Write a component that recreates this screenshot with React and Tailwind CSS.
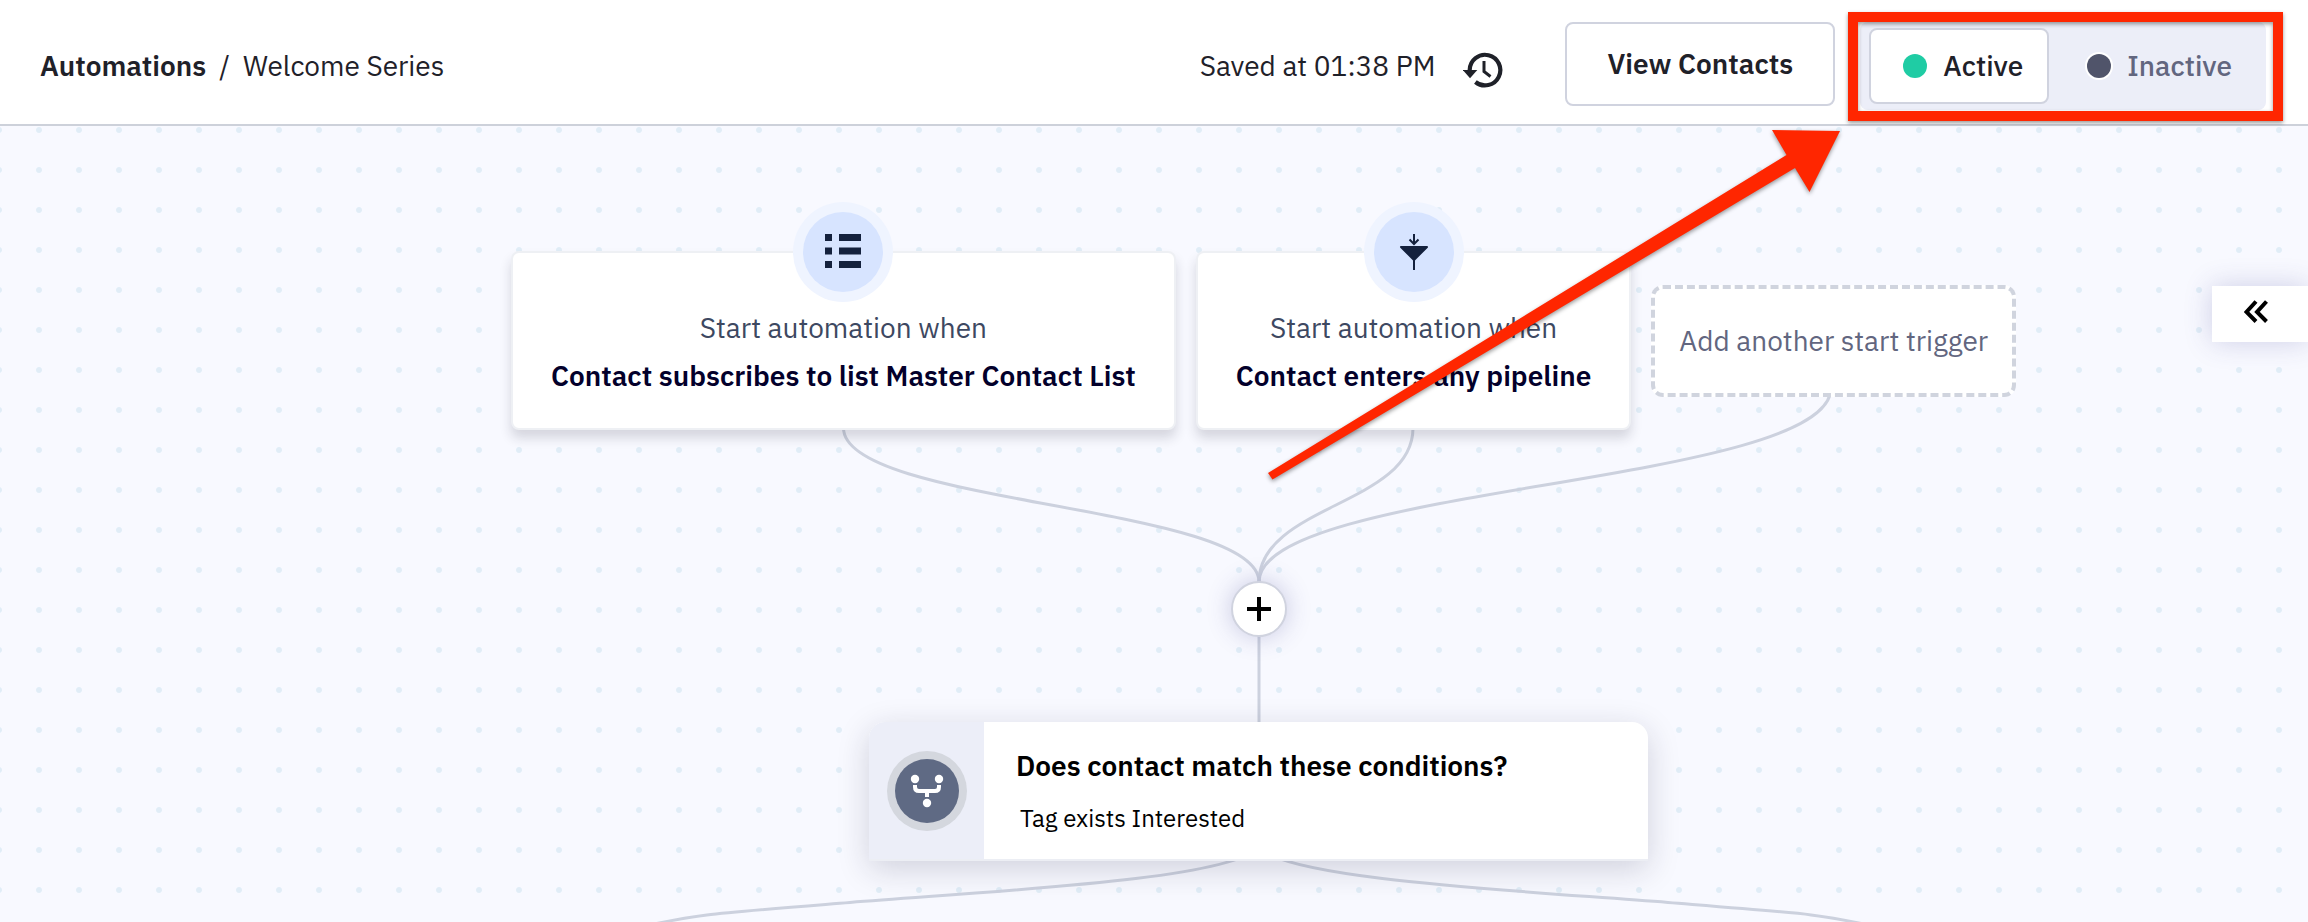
import React, { useState } from 'react';

const triggers = [
  { id: 'list', title: 'Contact subscribes to list Master Contact List', icon: ListIcon },
  { id: 'pipeline', title: 'Contact enters any pipeline', icon: FunnelIcon },
];

function HistoryIcon() {
  return (
    <svg width="40" height="36" viewBox="-22 -18 40 36" fill="none" stroke="#1f2129">
      <path d="M-15.3 0A15.3 15.3 0 1 1-9.6 12" strokeWidth="4.2" />
      <path d="M-22.3 0h14.6L-15 8.2z" fill="#1f2129" stroke="none" />
      <path d="M-1 -9V1.5L5.5 6.5" strokeWidth="3" />
    </svg>
  );
}

function ListIcon() {
  return (
    <svg width="36" height="36" viewBox="0 0 36 36" fill="#14213d">
      <path d="M0 0h7v7H0zM14 0h22v7H14zM0 13.5h7v7H0zM14 13.5h22v7H14zM0 27h7v7H0zM14 27h22v7H14z" />
    </svg>
  );
}

function FunnelIcon() {
  return (
    <svg width="36" height="36" viewBox="0 0 36 36" fill="none" stroke="#14213d" strokeWidth="2">
      <path d="M18 0v10M13.5 5.5L18 10l4.5-4.5" />
      <path d="M5 13h26L18 26z" fill="#14213d" strokeLinejoin="round" />
      <path d="M18 25v11" />
    </svg>
  );
}

function BranchIcon() {
  return (
    <svg width="36" height="36" viewBox="-18 -18 36 36" fill="none" stroke="#fff" strokeWidth="4">
      <path d="M-12 -6v2q0 4 4 4h16q4 0 4-4v-2M0 0v6" />
      <g fill="#fff" stroke="none">
        <circle cx="-12" cy="-12" r="4.2" />
        <circle cx="12" cy="-12" r="4.2" />
        <circle cx="0" cy="12" r="4.2" />
      </g>
    </svg>
  );
}

function TriggerCard({ title, icon: Icon }) {
  return (
    <div className="relative rounded-lg border-2 border-[#eef0f4] bg-white px-[38px] pt-[51px] pb-7 text-center leading-[48px] shadow-[0_8px_12px_rgba(30,30,50,0.16)]">
      <div className="absolute -top-[51px] left-1/2 flex size-[100px] -translate-x-1/2 items-center justify-center rounded-full bg-[#eff4ff]">
        <div className="flex size-20 items-center justify-center rounded-full bg-[#d7e4ff]">
          <Icon />
        </div>
      </div>
      <p className="text-[#3d4861]">Start automation when</p>
      <p className="font-semibold text-[#03002b]">{title}</p>
    </div>
  );
}

function StatusToggle() {
  const [active, setActive] = useState(true);

  const base = 'flex h-[76px] items-center gap-4 rounded-lg border-2 pl-8 pr-6 font-medium';
  const on = 'border-[#d0d3df] bg-white text-[#1f2129]';
  const off = 'border-transparent text-[#62667f]';

  return (
    <div className="relative flex items-center rounded-lg bg-[#eceef8] py-1.5 pr-2 pl-[9px]">
      <button type="button" aria-pressed={active} onClick={() => setActive(true)} className={`${base} ${active ? on : off}`}>
        <span className="size-6 rounded-full bg-[#1fcca4]" />
        Active
      </button>
      <button type="button" aria-pressed={!active} onClick={() => setActive(false)} className={`${base} ml-1 ${active ? off : on}`}>
        <span className="size-6 rounded-full bg-[#50546a] ring-2 ring-white" />
        Inactive
      </button>
      {/* highlight frame */}
      <div className="pointer-events-none absolute -top-2.5 -right-[17px] -bottom-[11px] -left-3 z-20 border-10 border-[#ff2600] shadow-[0_2px_4px_rgba(0,0,0,0.4),inset_0_2px_4px_rgba(0,0,0,0.4)]" />
    </div>
  );
}

function Header() {
  return (
    <header className="border-b-2 border-[#cdd1da] bg-white pt-[22px] pr-[42px] pb-3.5 pl-10">
      <div className="flex h-[88px] items-center justify-between">
        <nav className="flex gap-[13px]">
          <a href="#automations" className="font-semibold">Automations</a>
          <span>/</span>
          <span>Welcome Series</span>
        </nav>
        <div className="flex items-center">
          <span>Saved at 01:38 PM</span>
          <button type="button" aria-label="History" className="mt-2 ml-7">
            <HistoryIcon />
          </button>
          <button type="button" className="mr-[25px] ml-[62px] h-[84px] self-start rounded-lg border-2 border-[#d0d3df] px-10 font-semibold">
            View Contacts
          </button>
          <StatusToggle />
        </div>
      </div>
    </header>
  );
}

function Connectors() {
  return (
    <svg className="absolute top-0 left-0" width="2308" height="796" viewBox="0 126 2308 796" fill="none" stroke="#ccd1de" strokeWidth="3">
      <path d="M843.5 428C843.5 505 1259 505 1259 582" />
      <path d="M1413 428C1413 505 1259 505 1259 582" />
      <path d="M1831 388C1831 485 1259 485 1259 582" />
      <path d="M1259 630V724" />
      <path d="M1259 848C1225 880 1000 890.5 850 902.5S700 914 640 927" />
      <path d="M1259 848C1293 880 1518 890.5 1668 902.5S1818 914 1878 927" />
    </svg>
  );
}

function ConditionCard() {
  return (
    <div className="absolute top-[596px] left-[869px] flex w-[779px] rounded-t-2xl border-b-2 border-[#eceef4] bg-white shadow-[0_8px_32px_rgba(30,30,60,0.18)]">
      <div className="flex w-[115px] items-center justify-center rounded-tl-2xl bg-[#eceef8]">
        <div className="flex size-20 items-center justify-center rounded-full bg-[#d4d7de]">
          <div className="flex size-16 items-center justify-center rounded-full bg-[#5f6a84]">
            <BranchIcon />
          </div>
        </div>
      </div>
      <div className="pt-6 pb-[23px] pl-8 text-black">
        <h2 className="leading-10 font-semibold">Does contact match these conditions?</h2>
        <p className="mt-3.5 pl-1 text-2xl leading-9">Tag exists Interested</p>
      </div>
    </div>
  );
}

export default function App() {
  return (
    <div className="flex min-h-screen flex-col bg-white font-['IBM_Plex_Sans',Roboto,sans-serif] text-[28px] leading-10 text-[#1f2129]">
      <Header />
      <main className="relative min-h-[796px] flex-1 overflow-hidden bg-[#f8f9ff] bg-[radial-gradient(circle,#e1edf7_2.5px,transparent_3.5px)] bg-size-[40px_40px] bg-position-[19px_-16px]">
        <Connectors />

        <div className="absolute top-[125px] left-[511px] flex items-center gap-5 whitespace-nowrap">
          {triggers.map((t) => (
            <TriggerCard key={t.id} title={t.title} icon={t.icon} />
          ))}
          <button type="button" className="h-28 rounded-xl border-4 border-dashed border-[#d0d4de] bg-white px-6 text-[#62667f]">
            Add another start trigger
          </button>
        </div>

        <ConditionCard />

        <button
          type="button"
          aria-label="Add step"
          className="absolute top-[455px] left-[1231px] flex size-14 items-center justify-center rounded-full border-2 border-[#d0d3df] bg-white shadow-[0_0_24px_rgba(60,60,140,0.25)]"
        >
          <svg width="24" height="24" viewBox="0 0 24 24" stroke="#000" strokeWidth="4">
            <path d="M12 0v24M0 12h24" />
          </svg>
        </button>

        <button type="button" aria-label="Expand panel" className="absolute top-40 right-0 flex h-14 w-24 items-center bg-white pb-1 pl-8 shadow-[0_0_28px_rgba(60,60,140,0.22)]">
          <svg width="26" height="24" viewBox="0 0 26 24" fill="none" stroke="#000" strokeWidth="4">
            <path d="M12 1.5L2.5 12l9.5 9.5M22.5 1.5L13 12l9.5 9.5" />
          </svg>
        </button>

        <svg
          className="pointer-events-none absolute top-0 right-[460px] drop-shadow-[0_2px_2px_rgba(0,0,0,0.4)]"
          width="588"
          height="360"
          viewBox="1260 126 588 360"
          fill="#ff2600"
        >
          <path d="M1840 131L1772 130L1786.5 155L1268 473L1272.5 479.5L1795 168L1809.5 192z" />
        </svg>
      </main>
    </div>
  );
}
